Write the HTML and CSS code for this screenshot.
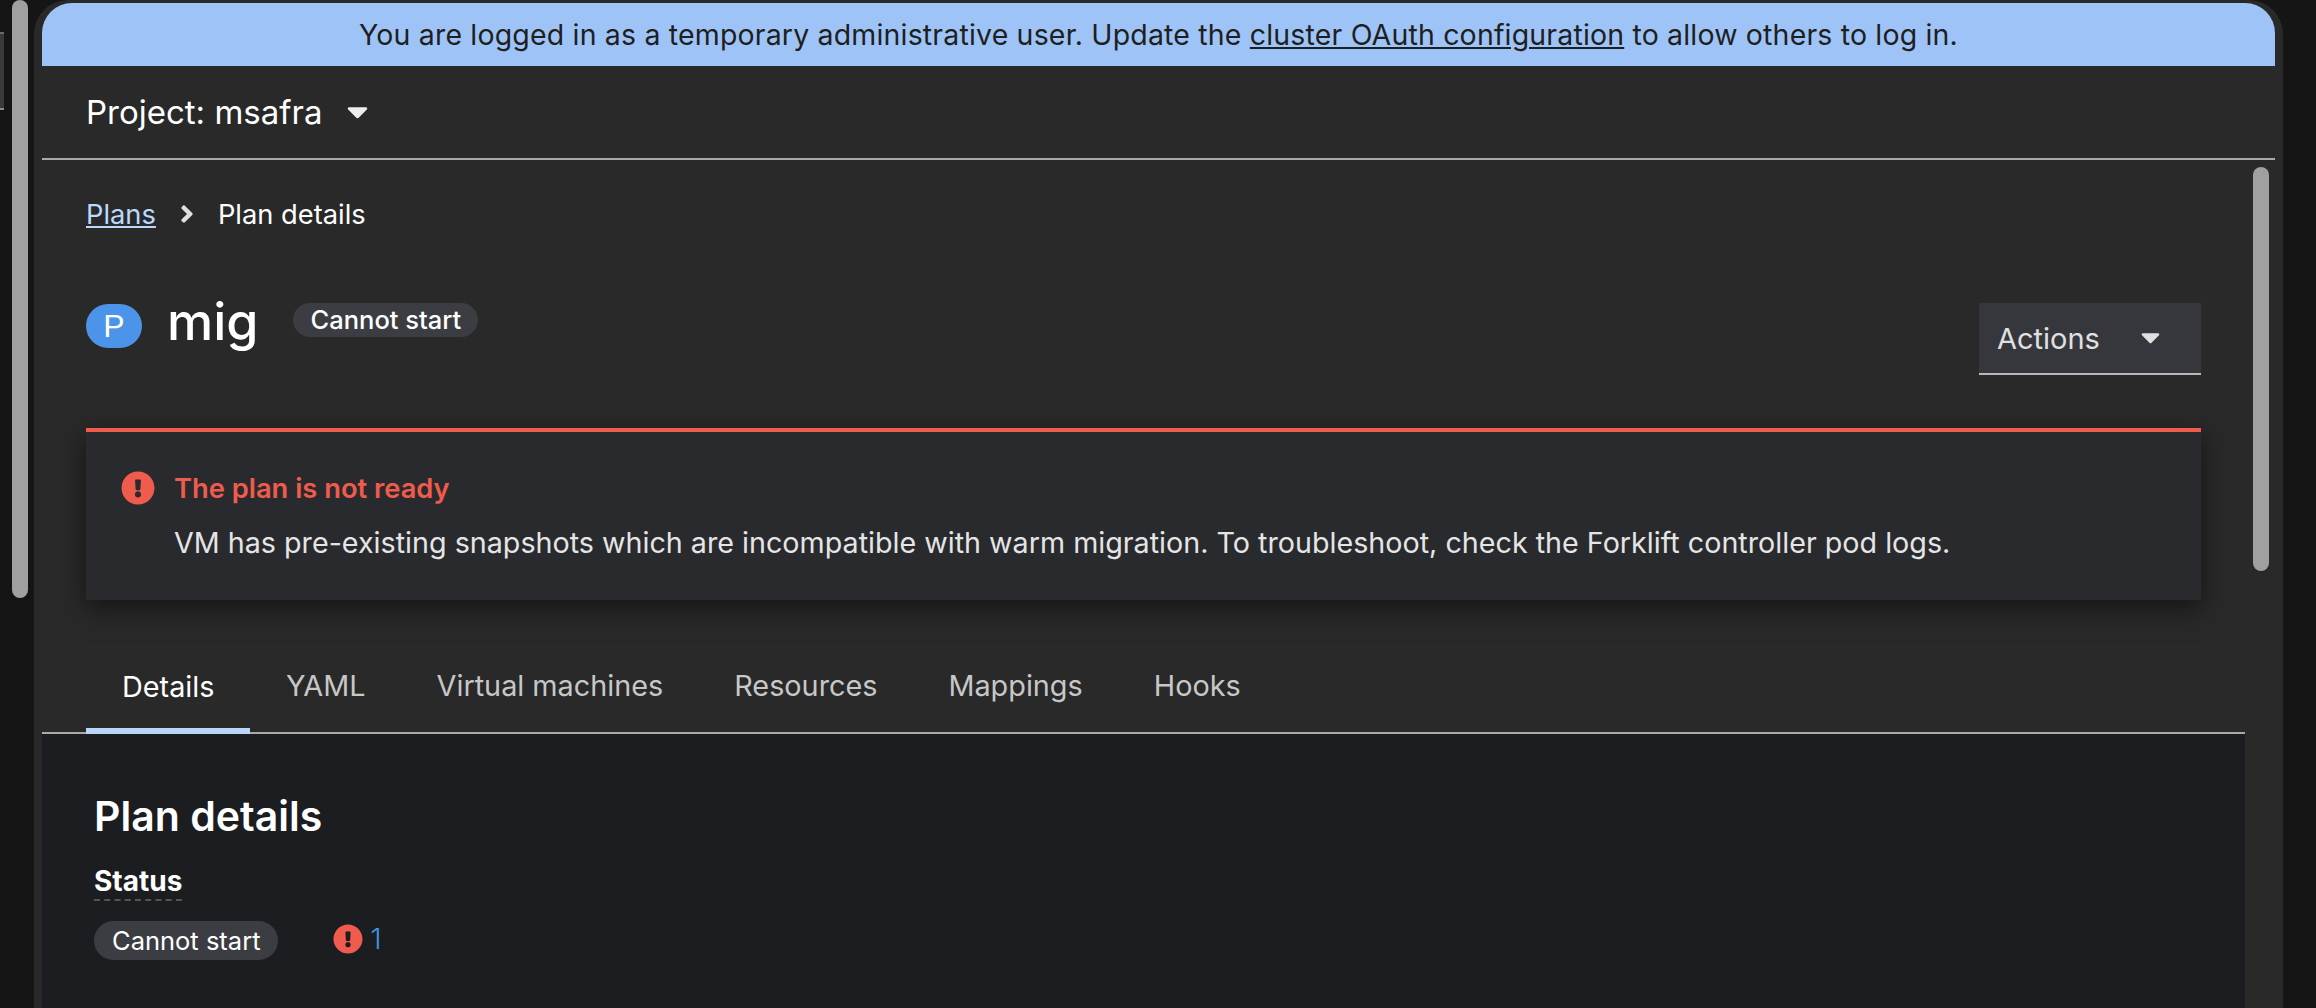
FILE: index.html
```html
<!DOCTYPE html>
<html lang="en">
<head>
<meta charset="utf-8">
<title>Plan details</title>
<link rel="stylesheet" href="styles.css">
</head>
<body>
<svg class="defs" width="0" height="0" aria-hidden="true">
  <symbol id="i-error" viewBox="0 0 512 512"><path d="M504 256c0 136.997-111.043 248-248 248S8 392.997 8 256C8 119.083 119.043 8 256 8s248 111.083 248 248zm-248 50c-25.405 0-46 20.595-46 46s20.595 46 46 46 46-20.595 46-46-20.595-46-46-46zm-43.673-165.346l7.418 136c.347 6.364 5.609 11.346 11.982 11.346h48.546c6.373 0 11.635-4.982 11.982-11.346l7.418-136c.375-6.874-5.098-12.654-11.982-12.654h-63.383c-6.884 0-12.356 5.78-11.981 12.654z"/></symbol>
  <symbol id="i-caret" viewBox="0 160 320 224"><path d="M31.3 192h257.3c17.8 0 26.7 21.5 14.1 34.1L174.1 354.8c-7.8 7.8-20.5 7.8-28.3 0L17.2 226.1C4.6 213.5 13.5 192 31.3 192z"/></symbol>
  <symbol id="i-angle" viewBox="0 0 256 512"><path d="M224.3 273l-136 136c-9.4 9.4-24.6 9.4-33.9 0l-22.6-22.6c-9.4-9.4-9.4-24.6 0-33.9l96.4-96.4-96.4-96.4c-9.4-9.4-9.4-24.6 0-33.9L54.3 103c9.4-9.4 24.6-9.4 33.9 0l136 136c9.5 9.4 9.5 24.6.1 34z"/></symbol>
</svg>
<div class="shell">
  <aside class="rail">
    <div class="rail-tab"></div>
    <div class="rail-thumb"></div>
  </aside>
  <div class="window">
    <div class="banner">You are logged in as a temporary administrative user. Update the <a href="#" class="banner-link">cluster OAuth configuration</a> to allow others to log in.</div>
    <div class="project-bar">
      <span class="project-name">Project: msafra</span>
      <svg class="caret-project"><use href="#i-caret"/></svg>
    </div>
    <div class="scroller">
      <main class="main">
        <nav class="crumbs">
          <a href="#" class="crumb-link">Plans</a>
          <svg class="crumb-sep"><use href="#i-angle"/></svg>
          <span class="crumb-current">Plan details</span>
        </nav>
        <header class="head">
          <div class="head-title">
            <span class="res-badge">P</span>
            <h1 class="plan-name">mig</h1>
            <span class="pill pill-head">Cannot start</span>
          </div>
          <button class="actions" type="button">
            <span>Actions</span>
            <svg class="caret-actions"><use href="#i-caret"/></svg>
          </button>
        </header>
        <section class="alert">
          <div class="alert-title">
            <svg class="icon-alert"><use href="#i-error"/></svg>
            <h4 class="alert-heading">The plan is not ready</h4>
          </div>
          <p class="alert-text">VM has pre-existing snapshots which are incompatible with warm migration. To troubleshoot, check the Forklift controller pod logs.</p>
        </section>
        <nav class="tabs">
          <a class="tab tab-active">Details</a>
          <a class="tab">YAML</a>
          <a class="tab">Virtual machines</a>
          <a class="tab">Resources</a>
          <a class="tab">Mappings</a>
          <a class="tab">Hooks</a>
        </nav>
        <section class="panel">
          <h2 class="panel-title">Plan details</h2>
          <div class="term-row"><span class="term">Status</span></div>
          <div class="status-row">
            <span class="pill pill-status">Cannot start</span>
            <span class="count">
              <svg class="icon-count"><use href="#i-error"/></svg>
              <a class="count-num">1</a>
            </span>
          </div>
        </section>
      </main>
      <div class="thumb-track"><div class="thumb"></div></div>
    </div>
  </div>
</div>
</body>
</html>
```
FILE: styles.css
```css
* { box-sizing: border-box; }
html, body { margin: 0; height: 100%; overflow: hidden; }
body { background: #151515; color: #fff; font-family: Inter, "Noto Sans", sans-serif; }
.defs { position: absolute; }
svg { display: block; fill: currentColor; }
a { color: inherit; }
h1, h2, h4, p { margin: 0; }

.shell { display: flex; height: 1008px; width: 2316px; }

.rail { width: 34px; flex: none; display: flex; align-items: flex-start; background: #151515; }
.rail-tab { width: 4px; height: 78px; margin-top: 32px; background: #3a3a3a; border-bottom: 2px solid #8a8a8a; border-top: 2px solid #6a6a6a; flex: none; }
.rail-thumb { width: 16px; height: 598px; margin-left: 8px; background: #a0a0a0; border-radius: 8px; flex: none; }

.window { width: 2249px; flex: none; background: #292929; padding: 3px 8px 0; border-radius: 34px 34px 0 0; display: flex; flex-direction: column; height: 1008px; }

.banner { height: 63px; flex: none; background: #9ec4f7; color: #1f1f1f; border-radius: 30px 30px 0 0; text-align: center; line-height: 64px; font-size: 28.5px; letter-spacing: .17px; white-space: nowrap; }
.banner-link { color: #1f1f1f; }

.project-bar { height: 94px; flex: none; border-bottom: 2px solid #a9a9a9; padding-left: 44px; display: flex; align-items: center; gap: 25px; }
.project-name { font-size: 33px; }
.caret-project { width: 21px; height: 15px; color: #eee; }

.scroller { flex: 1; display: flex; min-height: 0; }
.main { width: 2203px; flex: none; display: flex; flex-direction: column; }
.thumb-track { flex: none; margin-left: 8px; padding-top: 7px; }
.thumb { width: 16px; height: 404px; background: #a0a0a0; border-radius: 8px; }

.crumbs { height: 108px; flex: none; padding: 0 44px; display: flex; align-items: center; font-size: 27.3px; }
.crumb-link { color: #b9dafc; }
.crumb-sep { width: 14px; height: 28px; margin: 0 24px; color: #e0e0e0; }
.crumb-current { color: #fff; }

.head { height: 160px; flex: none; padding: 0 44px; display: flex; justify-content: space-between; align-items: flex-start; }
.head-title { display: flex; align-items: flex-start; }
.res-badge { width: 56px; height: 44px; margin-top: 36px; border-radius: 22px; background: #4c94ea; color: #fff; font-family: "Liberation Sans", sans-serif; font-size: 32px; display: flex; align-items: center; justify-content: center; }
.plan-name { font-size: 52px; font-weight: 500; margin: 19px 0 0 25px; line-height: 70px; }
.pill { display: inline-flex; align-items: center; background: #3c3d42; color: #fff; border-radius: 20px; }
.pill-head { height: 34px; margin: 35px 0 0 34px; padding: 0 0 2px 18px; width: 185px; font-size: 25.5px; font-weight: 500; }
.actions { width: 222px; height: 72px; margin-top: 35px; padding: 0 41px 0 18px; background: #36373c; color: #e0e0e0; border: 0; border-bottom: 2px solid #b8b8b8; display: flex; align-items: center; justify-content: space-between; font: inherit; font-size: 29px; }
.caret-actions { width: 19px; height: 14px; }

.alert { height: 172px; flex: none; margin: 0 44px; background: #292a2e; border-top: 4px solid #ef5b4c; box-shadow: 0 8px 24px rgba(0,0,0,.5); padding: 39px 36px 0 35px; }
.alert-title { display: flex; align-items: center; gap: 19px; height: 34px; }
.icon-alert { width: 34px; height: 34px; color: #ef5b4c; flex: none; }
.alert-heading { color: #ef5b4c; font-size: 27.3px; font-weight: 600; }
.alert-text { margin: 20px 0 0 53px; font-size: 28.7px; color: #e5e5e5; white-space: nowrap; }

.tabs { height: 134px; flex: none; padding: 0 44px; display: flex; align-items: flex-end; border-bottom: 2px solid #a9a9a9; }
.tab { height: 87px; padding: 0 35.5px 7px; display: flex; align-items: center; font-size: 28.8px; color: #c7c7c7; }
.tab-active { color: #fff; box-shadow: inset 0 -6px 0 #b9d8f9; margin-bottom: -2px; padding: 0 36px 9px; }

.panel { flex: 1; background: #1b1d21; padding: 57px 52px 0; }
.panel-title { font-size: 41px; font-weight: 600; line-height: 50px; }
.term-row { margin-top: 23px; }
.term { display: inline-block; font-size: 28px; font-weight: 700; line-height: 34px; border-bottom: 2px dashed #555; padding-bottom: 1px; }
.status-row { display: flex; align-items: center; margin-top: 20px; }
.pill-status { height: 39px; padding: 0 18px; font-size: 25.5px; }
.count { display: flex; align-items: center; margin-left: 55px; gap: 7px; }
.icon-count { width: 30px; height: 30px; color: #ef5b4c; margin-bottom: 3px; }
.count-num { color: #4394e5; font-size: 28px; font-weight: 300; margin-bottom: 3px; }
```
